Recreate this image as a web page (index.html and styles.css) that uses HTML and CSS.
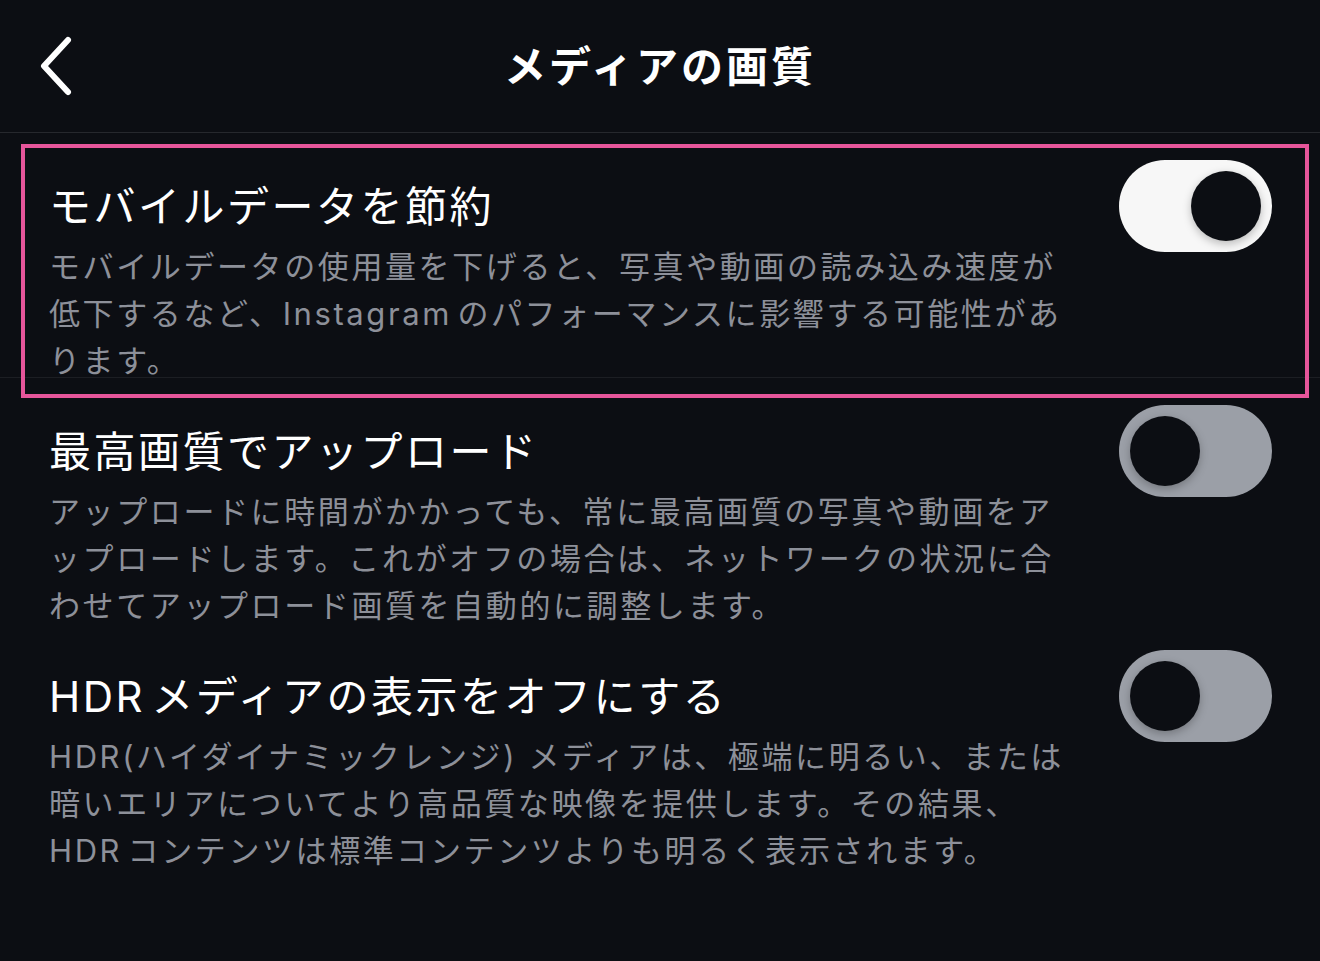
FILE: index.html
```html
<!DOCTYPE html>
<html lang="ja">
<head>
    <meta charset="UTF-8">
    <meta name="viewport" content="width=device-width, initial-scale=1.0">
    <title>メディアの画質</title>
    <link rel="stylesheet" href="styles.css">
</head>
<body>
<div class="screen">
    <div class="header">
        <div class="back">
            <svg width="40" height="62" viewBox="0 0 40 62">
                <path d="M32 5 L8 31 L32 57" fill="none" stroke="#fff" stroke-width="6" stroke-linecap="round" stroke-linejoin="round"/>
            </svg>
        </div>
        <h1>メディアの画質</h1>
    </div>

    <div class="row first">
        <div class="text">
            <div class="title">モバイルデータを節約</div>
            <div class="desc">モバイルデータの使用量を下げると、写真や動画の読み込み速度が<br>低下するなど、Instagram&#8202;のパフォーマンスに影響する可能性があ<br>ります。</div>
        </div>
        <div class="toggle on"><span class="knob"></span></div>
        <div class="highlight"></div>
    </div>

    <div class="row">
        <div class="text">
            <div class="title">最高画質でアップロード</div>
            <div class="desc">アップロードに時間がかかっても、常に最高画質の写真や動画をア<br>ップロードします。これがオフの場合は、ネットワークの状況に合<br>わせてアップロード画質を自動的に調整します。</div>
        </div>
        <div class="toggle"><span class="knob"></span></div>
    </div>

    <div class="row">
        <div class="text">
            <div class="title">HDR&#8202;メディアの表示をオフにする</div>
            <div class="desc">HDR(ハイダイナミックレンジ) メディアは、極端に明るい、または<br>暗いエリアについてより高品質な映像を提供します。その結果、<br>HDR&#8202;コンテンツは標準コンテンツよりも明るく表示されます。</div>
        </div>
        <div class="toggle"><span class="knob"></span></div>
    </div>
</div>
</body>
</html>
```

FILE: styles.css
```css
body {
    margin: 0;
    padding: 0;
    background: #0c0e13;
    font-family: Inter, "Noto Sans CJK JP", sans-serif;
    color: #fff;
}
.screen {
    width: 1320px;
    height: 961px;
    overflow: hidden;
}
.header {
    height: 132px;
    border-bottom: 1px solid #26282d;
    display: flex;
    align-items: center;
    justify-content: center;
    position: relative;
}
.back {
    position: absolute;
    left: 36px;
    top: 35px;
}
h1 {
    margin: 0;
    font-size: 42px;
    font-weight: 700;
    letter-spacing: 3px;
    line-height: 60px;
    margin-top: 2px;
}
.row {
    height: 245px;
    box-sizing: border-box;
    padding: 0 48px 0 49px;
    display: flex;
    align-items: flex-start;
    position: relative;
}
.row.first {
    border-bottom: 1px solid #1c1e23;
}
.text {
    flex: 1;
    padding-top: 44px;
}
.title {
    font-size: 42px;
    line-height: 60px;
    letter-spacing: 2.5px;
    color: #fff;
}
.desc {
    margin-top: 6px;
    font-size: 31px;
    line-height: 47px;
    letter-spacing: 2.6px;
    color: #8d9099;
    white-space: nowrap;
}
.toggle {
    margin-top: 27px;
    width: 153px;
    height: 92px;
    border-radius: 46px;
    background: #9b9fa7;
    box-sizing: border-box;
    padding: 11px;
    display: flex;
    justify-content: flex-start;
}
.toggle.on {
    background: #f7f7f7;
    justify-content: flex-end;
}
.knob {
    width: 70px;
    height: 70px;
    border-radius: 50%;
    background: #0c0e13;
    box-shadow: 0 3px 8px rgba(0, 0, 0, 0.25);
}
.highlight {
    position: absolute;
    left: 21px;
    top: 11px;
    width: 1288px;
    height: 254px;
    box-sizing: border-box;
    border: 4px solid #e6559a;
    pointer-events: none;
}
```
